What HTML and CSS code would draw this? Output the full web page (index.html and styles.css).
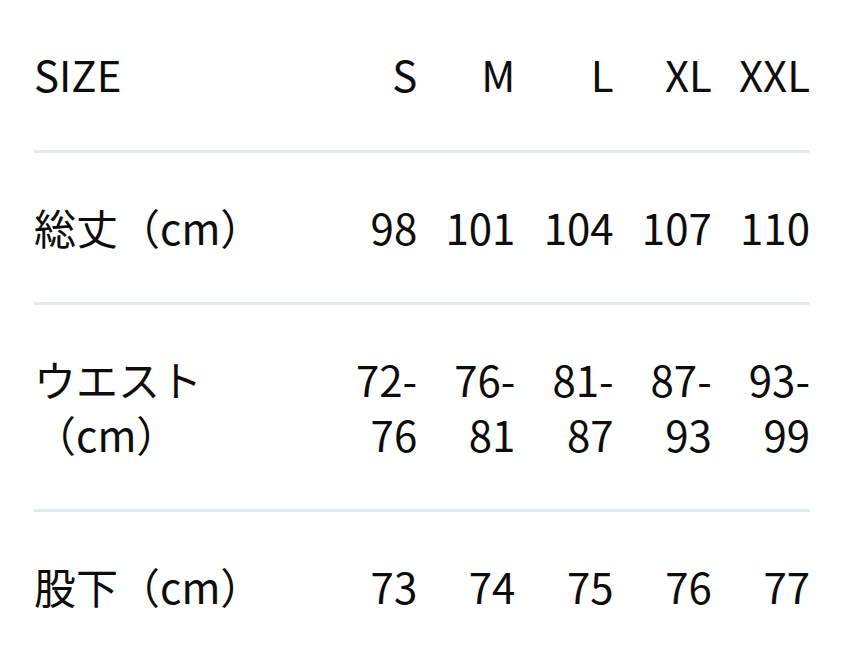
FILE: index.html
```html
<!DOCTYPE html>
<html lang="ja">
<head>
<meta charset="utf-8">
<link rel="stylesheet" href="styles.css">
</head>
<body>
<table class="size-table">
  <colgroup>
    <col class="col-label">
    <col class="col-val"><col class="col-val"><col class="col-val"><col class="col-val"><col class="col-val">
  </colgroup>
  <tr>
    <th class="label">SIZE</th>
    <th class="val">S</th>
    <th class="val">M</th>
    <th class="val">L</th>
    <th class="val">XL</th>
    <th class="val">XXL</th>
  </tr>
  <tr>
    <td class="label">総丈（cm）</td>
    <td class="val">98</td>
    <td class="val">101</td>
    <td class="val">104</td>
    <td class="val">107</td>
    <td class="val">110</td>
  </tr>
  <tr>
    <td class="label">ウエスト（cm）</td>
    <td class="val">72-76</td>
    <td class="val">76-81</td>
    <td class="val">81-87</td>
    <td class="val">87-93</td>
    <td class="val">93-99</td>
  </tr>
  <tr class="last">
    <td class="label">股下（cm）</td>
    <td class="val">73</td>
    <td class="val">74</td>
    <td class="val">75</td>
    <td class="val">76</td>
    <td class="val">77</td>
  </tr>
</table>
</body>
</html>
```
FILE: styles.css
```css
html, body {
  margin: 0;
  padding: 0;
  background: #ffffff;
}
body {
  font-family: "Noto Sans CJK JP", "Noto Sans", sans-serif;
  color: #0d0d0d;
}
.size-table {
  width: 776px;
  margin-left: 34px;
  border-collapse: collapse;
  table-layout: fixed;
  font-size: 42px;
  line-height: 1.3;
}
.col-label { width: 285px; }
.col-val { width: 98.2px; }
.size-table th,
.size-table td {
  font-weight: 400;
  padding: 47px 0 48px;
  border-bottom: 3px solid #e2e8ee;
  vertical-align: middle;
}
.size-table .last td {
  border-bottom: none;
}
.label {
  text-align: left;
}
.val {
  text-align: right;
  padding-right: 2px;
}
```
